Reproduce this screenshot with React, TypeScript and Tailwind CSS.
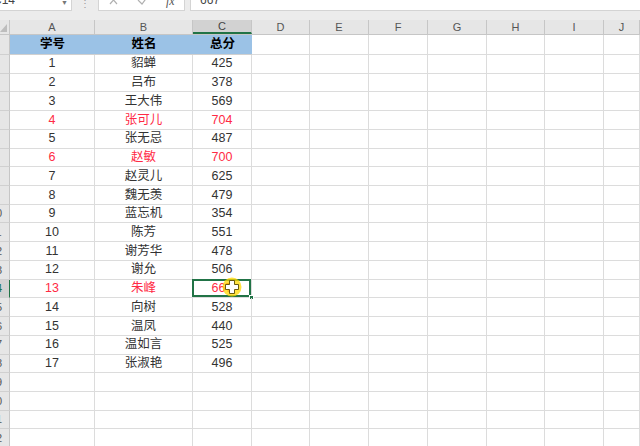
import React from 'react';

type Row = { no: number; name: string; score: number; red?: boolean };

const rows: Row[] = [
  { no: 1, name: '貂蝉', score: 425 },
  { no: 2, name: '吕布', score: 378 },
  { no: 3, name: '王大伟', score: 569 },
  { no: 4, name: '张可儿', score: 704, red: true },
  { no: 5, name: '张无忌', score: 487 },
  { no: 6, name: '赵敏', score: 700, red: true },
  { no: 7, name: '赵灵儿', score: 625 },
  { no: 8, name: '魏无羡', score: 479 },
  { no: 9, name: '蓝忘机', score: 354 },
  { no: 10, name: '陈芳', score: 551 },
  { no: 11, name: '谢芳华', score: 478 },
  { no: 12, name: '谢允', score: 506 },
  { no: 13, name: '朱峰', score: 667, red: true },
  { no: 14, name: '向树', score: 528 },
  { no: 15, name: '温凤', score: 440 },
  { no: 16, name: '温如言', score: 525 },
  { no: 17, name: '张淑艳', score: 496 },
];

const cols = ['A', 'B', 'C', 'D', 'E', 'F', 'G', 'H', 'I', 'J'];
const widths = ['w-[85px]', 'w-[98px]', 'w-[59px]', 'w-[58px]', 'w-[59px]', 'w-[59px]', 'w-[59px]', 'w-[58px]', 'w-[59px]', 'w-[36px]'];
const font = { fontFamily: '"Liberation Sans", "Noto Sans CJK SC", sans-serif' };

function RowHead({ n, selected }: { n: number; selected?: boolean }) {
  return (
    <div
      className={`flex w-[10px] shrink-0 justify-end overflow-hidden border-b border-r text-[11px] ${
        selected ? 'border-r-[#217346] bg-[#d2d2d2] text-[#217346]' : 'border-r-[#c6c6c6] bg-[#e6e6e6] text-[#555]'
      } border-b-[#d0d0d0]`}
    >
      <div className="flex w-[26px] shrink-0 items-center justify-center">{n}</div>
    </div>
  );
}

function Cursor() {
  return (
    <div className="pointer-events-none absolute left-[222px] top-[277px] h-[20px] w-[20px]">
      <svg width="20" height="20" viewBox="0 0 20 20">
        <circle cx="10" cy="10" r="9.5" fill="#ffd800" opacity="0.75" />
        <path
          d="M7.5 3.5h5v4h4v5h-4v4h-5v-4h-4v-5h4z"
          fill="#fff"
          stroke="#5a4a00"
          strokeWidth="0.9"
          strokeLinejoin="round"
        />
      </svg>
    </div>
  );
}

export default function App() {
  const empty = [18, 19, 20, 21, 22];
  return (
    <div className="relative h-[446px] w-[640px] overflow-hidden bg-white" style={font}>
      {/* formula bar */}
      <div className="flex h-[20px] items-start bg-[#ececec]">
        <div className="relative h-[11px] w-[72px] overflow-hidden border-b border-r border-[#d4d4d4] bg-white">
          <div className="-ml-[7px] -mt-[7px] text-[12px] leading-[14px] text-[#444]">C14</div>
          <div className="absolute left-[61px] top-[-2px] text-[7px] text-[#777]">▼</div>
        </div>
        <div className="flex h-[11px] w-[26px] items-start justify-center overflow-hidden text-[10px] leading-[8px] text-[#999]">⋮</div>
        <div className="flex h-[11px] w-[87px] items-start overflow-hidden border-b border-l border-r border-[#d4d4d4] bg-white text-[#aaa]">
          <svg className="ml-[10px] -mt-[2px]" width="10" height="8" viewBox="0 0 10 8">
            <path d="M1 -2L8 6M8 -2L1 6" stroke="#b0b0b0" strokeWidth="1.2" fill="none" />
          </svg>
          <svg className="ml-[18px] -mt-[2px]" width="12" height="8" viewBox="0 0 12 8">
            <path d="M1 2L5 6L11 -2" stroke="#b0b0b0" strokeWidth="1.2" fill="none" />
          </svg>
          <div className="ml-[17px] -mt-[6px] text-[12px] italic leading-[14px] text-[#555]" style={{ fontFamily: '"Liberation Serif", serif' }}>
            fx
          </div>
        </div>
        <div className="ml-[5px] h-[11px] flex-1 overflow-hidden border-b border-l border-[#d4d4d4] bg-white">
          <div className="ml-[9px] -mt-[7px] text-[12px] leading-[14px] text-[#444]">667</div>
        </div>
      </div>

      {/* column headers */}
      <div className="flex h-[15px] border-b border-[#c6c6c6] bg-[#e6e6e6]">
        <div className="relative w-[10px] shrink-0 border-r border-[#c6c6c6]">
          <svg className="absolute left-0 top-[4px]" width="8" height="9" viewBox="0 0 8 9">
            <path d="M7 0V8H0z" fill="#bdbdbd" />
          </svg>
        </div>
        {cols.map((c, i) => (
          <div
            key={c}
            className={`flex shrink-0 items-center justify-center border-r border-[#c6c6c6] text-[11px] ${widths[i]} ${
              c === 'C' ? 'border-b-2 border-b-[#217346] bg-[#d2d2d2] text-[#444]' : 'text-[#555]'
            }`}
          >
            {c}
          </div>
        ))}
      </div>

      {/* header row */}
      <div className="flex h-[20px]">
        <RowHead n={1} />
        <div className="flex w-[242px] shrink-0 border-b border-[#d0d0d0] bg-[#9bc2e6] text-[12.5px] font-bold text-black">
          <div className="flex w-[85px] items-center justify-center">学号</div>
          <div className="flex w-[98px] items-center justify-center">姓名</div>
          <div className="flex w-[59px] items-center justify-center">总分</div>
        </div>
        {widths.slice(3).map((w, i) => (
          <div key={i} className={`shrink-0 border-b border-r border-[#dcdcdc] ${w}`} />
        ))}
      </div>

      {/* data rows */}
      {rows.map((r, idx) => {
        const color = r.red ? 'text-[#ff2a45]' : 'text-[#333]';
        const sel = r.no === 13;
        return (
          <div key={r.no} className="flex h-[18.72px]">
            <RowHead n={idx + 2} selected={sel} />
            <div className={`flex w-[85px] shrink-0 items-center justify-center border-b border-r border-[#dcdcdc] text-[12.5px] ${color}`}>{r.no}</div>
            <div className={`flex w-[98px] shrink-0 items-center justify-center border-b border-r border-[#dcdcdc] text-[12.5px] ${color}`}>{r.name}</div>
            <div className={`relative flex w-[59px] shrink-0 items-center justify-center border-b border-r border-[#dcdcdc] text-[12.5px] ${color}`}>
              {r.score}
              {sel && (
                <>
                  <div className="absolute -left-[1px] -top-[1px] h-[calc(100%+1px)] w-[calc(100%+1px)] border-2 border-[#217346]" />
                  <div className="absolute -bottom-[3px] -right-[3px] h-[5px] w-[5px] border border-white bg-[#217346]" />
                </>
              )}
            </div>
            {widths.slice(3).map((w, i) => (
              <div key={i} className={`shrink-0 border-b border-r border-[#dcdcdc] ${w}`} />
            ))}
          </div>
        );
      })}

      {empty.map((n) => (
        <div key={n} className="flex h-[18.72px]">
          <RowHead n={n + 1} />
          {widths.map((w, i) => (
            <div key={i} className={`shrink-0 border-b border-r border-[#dcdcdc] ${w}`} />
          ))}
        </div>
      ))}

      <Cursor />
    </div>
  );
}
